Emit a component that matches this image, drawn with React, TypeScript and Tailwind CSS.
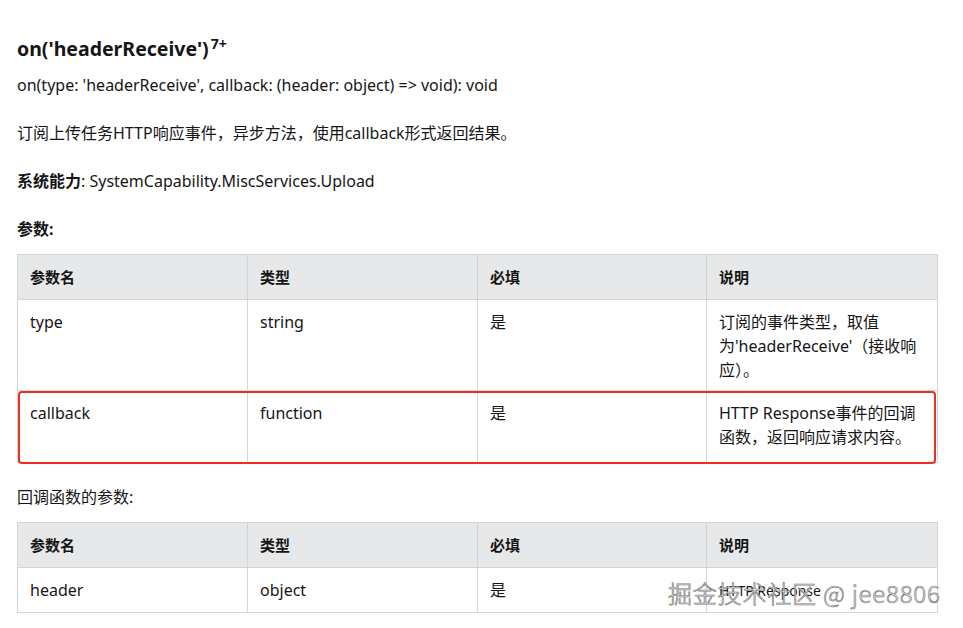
import React from "react";

const font = "font-['Noto_Sans','Noto_Sans_CJK_SC',sans-serif]";

function HeaderRow() {
  return (
    <tr className="h-[45px] bg-[#e7e8ea]">
      {["参数名", "类型", "必填", "说明"].map((h) => (
        <th key={h} className="border border-[#d4d5d7] px-[12px] pt-[10px] text-left align-top font-bold text-[15px] leading-[24px]">
          {h}
        </th>
      ))}
    </tr>
  );
}

function Cell({ children }: { children: React.ReactNode }) {
  return (
    <td className="border border-[#d4d5d7] px-[12px] pt-[10px] align-top text-[16px] leading-[24px]">
      {children}
    </td>
  );
}

export default function App() {
  return (
    <div className={`relative w-[963px] h-[628px] overflow-hidden bg-white text-[#161616] ${font}`}>
      <div className="flex flex-col pl-[17px] pr-[26px] pt-[35px]">
        <h2 className="text-[19.5px] leading-[28px] font-bold">
          on('headerReceive')<sup className="ml-[2px] text-[14px] font-bold">7+</sup>
        </h2>
        <p className="mt-[10px] text-[16px] leading-[24px]">
          on(type: 'headerReceive', callback: (header: object) =&gt; void): void
        </p>
        <p className="mt-[24px] text-[16px] leading-[24px]">订阅上传任务HTTP响应事件，异步方法，使用callback形式返回结果。</p>
        <p className="mt-[24px] text-[16px] leading-[24px]">
          <span className="font-bold">系统能力</span>: SystemCapability.MiscServices.Upload
        </p>
        <p className="mt-[24px] text-[16px] leading-[24px] font-bold">参数:</p>
        <div className="relative mt-[13px] w-[920px]">
          <table className="w-[920px] border-collapse table-fixed">
            <colgroup>
              <col className="w-[230px]" />
              <col className="w-[230px]" />
              <col className="w-[229px]" />
              <col className="w-[231px]" />
            </colgroup>
            <thead>
              <HeaderRow />
            </thead>
            <tbody>
              <tr className="h-[91px]">
                <Cell>type</Cell>
                <Cell>string</Cell>
                <Cell>是</Cell>
                <Cell>
                  订阅的事件类型，取值
                  <br />
                  为'headerReceive'（接收响
                  <br />
                  应）。
                </Cell>
              </tr>
              <tr className="h-[72px]">
                <Cell>callback</Cell>
                <Cell>function</Cell>
                <Cell>是</Cell>
                <Cell>
                  HTTP Response事件的回调
                  <br />
                  函数，返回响应请求内容。
                </Cell>
              </tr>
            </tbody>
          </table>
          <div className="absolute left-[1px] right-[1px] bottom-[-1px] h-[73px] rounded-[4px] border-2 border-[#e8321b]" />
        </div>
        <p className="mt-[22px] text-[16px] leading-[24px]">回调函数的参数:</p>
        <table className="mt-[13px] w-[920px] border-collapse table-fixed">
          <colgroup>
            <col className="w-[230px]" />
            <col className="w-[230px]" />
            <col className="w-[229px]" />
            <col className="w-[231px]" />
          </colgroup>
          <thead>
            <HeaderRow />
          </thead>
          <tbody>
            <tr className="h-[45px]">
              <Cell>header</Cell>
              <Cell>object</Cell>
              <Cell>是</Cell>
              <Cell>
                <span className="text-[14px]">HTTP Response</span>
              </Cell>
            </tr>
          </tbody>
        </table>
      </div>
      <div className="absolute left-[668px] top-[577px] text-[24px] leading-[32px] font-light text-white tracking-[0.8px] [-webkit-text-stroke:0.7px_#7d7d7d] font-['Noto_Sans_CJK_SC',sans-serif]">
        掘金技术社区 @ jee8806
      </div>
    </div>
  );
}
